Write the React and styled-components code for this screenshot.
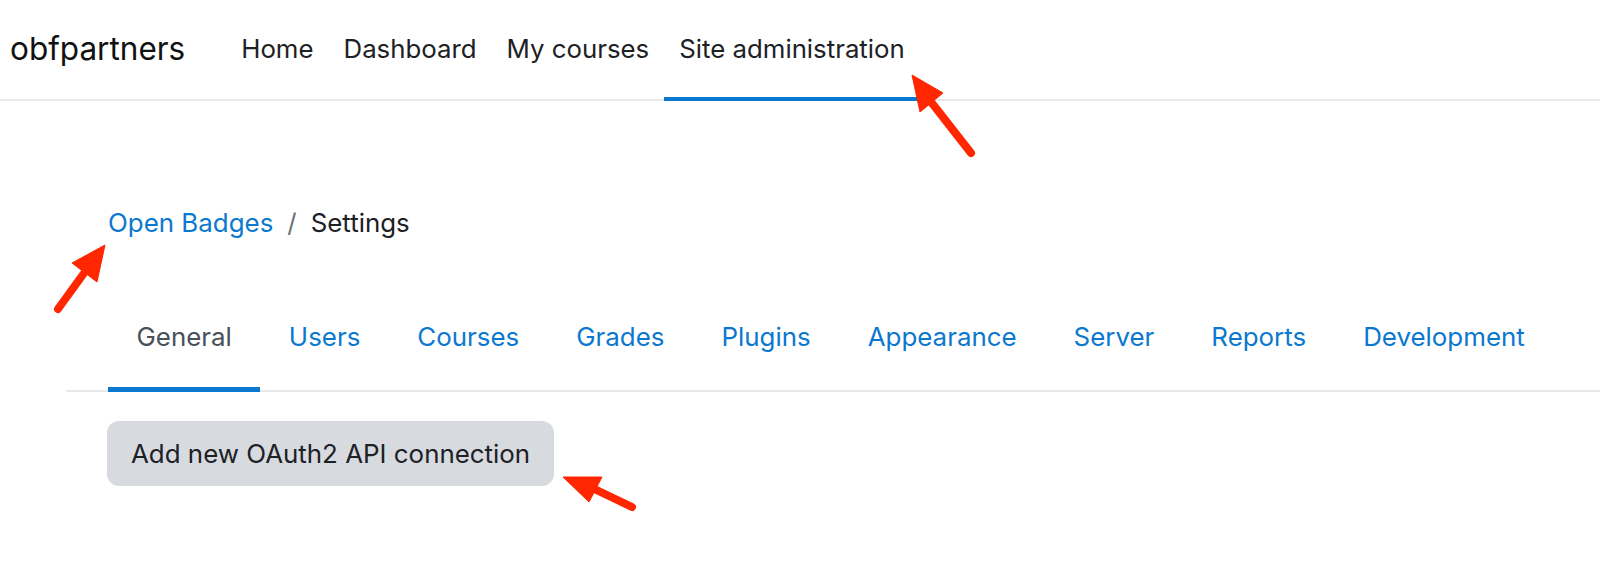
import React from 'react'
import styled, { createGlobalStyle } from 'styled-components'

const GlobalStyle = createGlobalStyle`
  * { box-sizing: border-box; }
  body {
    margin: 0;
    background: #fff;
    font-family: Inter, "Noto Sans", sans-serif;
    color: #1d2125;
  }
`
const Page = styled.div`
  position: relative;
  width: 1600px;
  height: 569px;
  overflow: hidden;
  background: #fff;
`
const Header = styled.header`
  display: flex;
  align-items: flex-start;
  height: 101px;
  border-bottom: 2px solid #e7e8e9;
  padding-left: 10px;
`
const Brand = styled.div`
  font-size: 31.5px;
  line-height: 97px;
  margin-right: 41px;
  color: #111;
`
const NavItem = styled.a`
  display: flex;
  align-items: center;
  height: 101px;
  padding: 0 15px;
  font-size: 25.8px;
  color: #1d2125;
  border-bottom: 4px solid ${p => (p.active ? '#0b78cf' : 'transparent')};
  text-decoration: none;
`
const Main = styled.main`
  display: flex;
  flex-direction: column;
  align-items: flex-start;
`
const Breadcrumb = styled.nav`
  display: flex;
  align-items: center;
  margin: 101px 0 0 108px;
  height: 40px;
  font-size: 25.9px;
`
const Crumb = styled.a`
  color: ${p => (p.link ? '#0b78cf' : '#1d2125')};
  text-decoration: none;
`
const Sep = styled.span`
  color: #6a737b;
  margin: 0 14px;
`
const TabBar = styled.div`
  display: flex;
  align-self: stretch;
  margin: 50px 0 0 66px;
  padding-left: 42px;
  border-bottom: 2px solid #e7e8e9;
`
const Tab = styled.a`
  padding: 30px 28.5px 35px;
  line-height: 30px;
  font-size: 25.9px;
  margin-bottom: -2px;
  color: ${p => (p.active ? '#495057' : '#0b78cf')};
  border-bottom: 5px solid ${p => (p.active ? '#0b78cf' : 'transparent')};
  text-decoration: none;
`
const Button = styled.button`
  margin: 29px 0 0 107px;
  height: 65px;
  padding: 0 24px;
  border: none;
  border-radius: 12px;
  background: #d7dbdf;
  color: #1d2125;
  font-family: inherit;
  font-size: 25.9px;
`
const Overlay = styled.svg`
  position: absolute;
  top: 0;
  left: 0;
  pointer-events: none;
`

const arrows = [
  { tip: [912, 75], a: [943, 93], b: [920, 112], tail: [971, 153] },
  { tip: [105, 245], a: [72, 263], b: [97, 282], tail: [58, 309] },
  { tip: [563, 477], a: [602, 477], b: [589, 502], tail: [632, 507] },
]

const tabs = ['General', 'Users', 'Courses', 'Grades', 'Plugins', 'Appearance', 'Server', 'Reports', 'Development']

export default function App() {
  return (
    <Page>
      <GlobalStyle />
      <Header>
        <Brand>obfpartners</Brand>
        <NavItem>Home</NavItem>
        <NavItem>Dashboard</NavItem>
        <NavItem>My courses</NavItem>
        <NavItem active>Site administration</NavItem>
      </Header>
      <Main>
        <Breadcrumb>
          <Crumb link>Open Badges</Crumb>
          <Sep>/</Sep>
          <Crumb>Settings</Crumb>
        </Breadcrumb>
        <TabBar>
          {tabs.map((t, i) => (
            <Tab key={t} active={i === 0}>{t}</Tab>
          ))}
        </TabBar>
        <Button>Add new OAuth2 API connection</Button>
      </Main>
      <Overlay width="1600" height="569">
        {arrows.map((ar, i) => {
          const mx = (ar.a[0] + ar.b[0]) / 2
          const my = (ar.a[1] + ar.b[1]) / 2
          return (
            <g key={i} fill="#ff2600" stroke="#ff2600">
              <line x1={ar.tail[0]} y1={ar.tail[1]} x2={mx} y2={my} strokeWidth="8" strokeLinecap="round" />
              <polygon points={`${ar.tip} ${ar.a} ${ar.b}`} strokeWidth="1" strokeLinejoin="round" />
            </g>
          )
        })}
      </Overlay>
    </Page>
  )
}
